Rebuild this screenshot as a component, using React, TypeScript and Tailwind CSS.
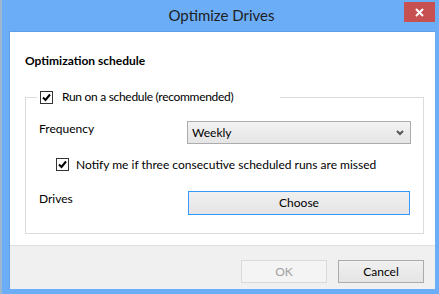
import React from "react";

const font = { fontFamily: "Lato, 'Noto Sans', sans-serif" };

function Check() {
  return (
    <span className="w-[13px] h-[13px] border border-[#333333] bg-white flex items-center justify-center shrink-0">
      <svg width="9" height="9" viewBox="0 0 9 9">
        <path d="M1 4.5 L3.5 7 L8 1.5" fill="none" stroke="#000" strokeWidth="2" />
      </svg>
    </span>
  );
}

export default function App() {
  return (
    <div
      className="w-[439px] h-[294px] bg-[#6badf6] border-l-2 border-[#9fb6cf] flex flex-col text-[12px] text-black"
      style={font}
    >
      <div className="h-[31px] shrink-0 flex items-start relative">
        <div className="flex-1 text-center text-[15px] text-[#1e1e1e] pt-[4px] pl-[2px]">Optimize Drives</div>
        <div className="absolute right-[4px] top-[2px] w-[31px] h-[20px] bg-[#c75050] flex items-center justify-center">
          <svg width="9" height="9" viewBox="0 0 9 9">
            <path d="M1 1 L8 8 M8 1 L1 8" stroke="#fff" strokeWidth="2" />
          </svg>
        </div>
      </div>
      <div className="flex-1 ml-[7px] mr-[4px] mb-[5px] border-t border-l border-[#5f9fe6] flex flex-col bg-white">
        <div className="flex-1 flex flex-col pl-[15px] pr-[11px]">
          <div className="font-bold h-[16px] mt-[21px] leading-[16px]">Optimization schedule</div>
          <fieldset className="border border-[#dcdcdc] mt-[20px] h-[145px] pl-[13px] pr-[12px]">
            <legend className="-ml-[2px] pl-[3px] pr-[47px]">
              <span className="flex items-center gap-[9px] h-[16px]">
                <Check />
                <span className="tracking-[-0.3px]">Run on a schedule (recommended)</span>
              </span>
            </legend>
            <div className="flex flex-col pt-[16px]">
              <div className="flex items-start justify-between h-[23px]">
                <span className="leading-[16px]">Frequency</span>
                <div className="w-[224px] h-[23px] border border-[#acacac] bg-gradient-to-b from-[#f2f2f2] to-[#e5e5e5] flex items-center justify-between pl-[4px] pr-[6px]">
                  <span>Weekly</span>
                  <svg width="8" height="6" viewBox="0 0 8 6">
                    <path d="M1 1 L4 4 L7 1" fill="none" stroke="#555" strokeWidth="2" />
                  </svg>
                </div>
              </div>
              <div className="flex items-center gap-[7px] ml-[17px] mt-[14px] h-[13px]">
                <Check />
                <span>Notify me if three consecutive scheduled runs are missed</span>
              </div>
              <div className="flex items-start justify-between mt-[20px] h-[24px]">
                <span className="leading-[16px]">Drives</span>
                <div className="w-[222px] mr-[1px] h-[24px] border border-[#3399ff] bg-gradient-to-b from-[#f0f0f0] to-[#e5e5e5] flex items-center justify-center">
                  Choose
                </div>
              </div>
            </div>
          </fieldset>
        </div>
        <div className="h-[44px] shrink-0 bg-[#f0f0f0] border-t border-[#dfdfdf] flex justify-end items-start pt-[14px] pr-[11px] gap-[11px]">
          <div className="w-[86px] h-[23px] border border-[#d9d9d9] bg-[#f4f4f4] text-[#a0a0a0] flex items-center justify-center">
            OK
          </div>
          <div className="w-[86px] h-[23px] border border-[#acacac] bg-gradient-to-b from-[#f0f0f0] to-[#e5e5e5] flex items-center justify-center">
            Cancel
          </div>
        </div>
      </div>
    </div>
  );
}
